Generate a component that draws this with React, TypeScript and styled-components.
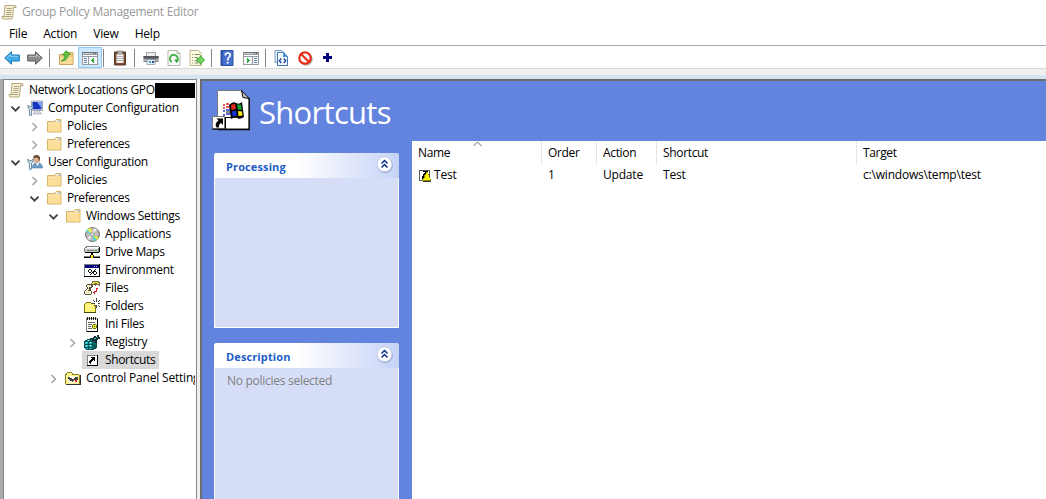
import React from "react";
import styled, { createGlobalStyle } from "styled-components";

const Global = createGlobalStyle`
  * { box-sizing: border-box; }
  body { margin: 0; background: #fff; overflow: hidden; }
  svg { display: block; flex: none; }
`;

const Window = styled.div`
  width: 1046px;
  height: 499px;
  display: flex;
  flex-direction: column;
  overflow: hidden;
  background: #fff;
  color: #000;
  font: 12px/18px "Open Sans", "Noto Sans", sans-serif;
  letter-spacing: -0.2px;
  white-space: nowrap;
`;

const TitleBar = styled.header`
  height: 24px;
  flex: none;
  display: flex;
  align-items: center;
  padding-left: 1px;
  gap: 5px;
  color: #999;
  letter-spacing: -0.28px;
`;

const MenuBar = styled.nav`
  height: 21px;
  flex: none;
  display: flex;
  align-items: center;
  padding: 0 0 1px 9px;
  gap: 16px;
`;

const Toolbar = styled.div`
  height: 24px;
  flex: none;
  display: flex;
  align-items: center;
  border-top: 1px solid #a5a7ac;
  border-bottom: 1px solid #d9d9d9;
  padding: 1px 0 0 4px;
`;

const Tool = styled.span<{ $gap?: number; $active?: boolean }>`
  display: flex;
  align-items: center;
  justify-content: center;
  width: ${(p) => (p.$active ? 24 : 16)}px;
  height: ${(p) => (p.$active ? 21 : 16)}px;
  margin-left: ${(p) => p.$gap ?? 0}px;
  border: ${(p) => (p.$active ? "1px solid #90c8f6" : "none")};
  background: ${(p) => (p.$active ? "#cce8ff" : "transparent")};
`;

const Separator = styled.i<{ $gap: number }>`
  width: 1px;
  height: 18px;
  margin-left: ${(p) => p.$gap}px;
  background: #858585;
`;

const Band = styled.div`
  height: 10px;
  flex: none;
  background: #f0f0f0;
  border-bottom: 4px solid #d6e3f0;
`;

const Body = styled.main`
  flex: 1;
  min-height: 0;
  display: flex;
`;

const Edge = styled.div`
  width: 3px;
  flex: none;
  background: #ababab;
`;

const TreePane = styled.aside`
  width: 194px;
  flex: none;
  overflow: hidden;
  border: 1px solid #828790;
  border-bottom: 0;
  padding-top: 1px;
`;

const Splitter = styled.div`
  width: 3px;
  flex: none;
  background: #f0eeee;
`;

const TreeRow = styled.div<{ $level: number }>`
  height: 18px;
  display: flex;
  align-items: center;
  margin-right: 1px;
  overflow: hidden;
  padding-left: ${(p) => (p.$level ? p.$level * 19 - 13 : 4)}px;
`;

const Slot = styled.span`
  width: 15px;
  flex: none;
`;

const Node = styled.span<{ $selected?: boolean; $level: number }>`
  height: 18px;
  flex: none;
  display: flex;
  align-items: center;
  gap: 5px;
  padding: 0 4px 0 ${(p) => (p.$level ? 2 : 0)}px;
  background: ${(p) => (p.$selected ? "#d9d9d9" : "transparent")};
`;

const Label = styled.span<{ $tracking?: number }>`
  letter-spacing: ${(p) => p.$tracking ?? -0.22}px;
`;

const Redaction = styled.span`
  flex: 1;
  height: 15px;
  margin: 0 -1px 0 -4px;
  background: #000;
`;

const Content = styled.section`
  flex: 1;
  min-width: 0;
  display: flex;
  flex-direction: column;
  border-top: 2px solid #6d6d6d;
  border-left: 2px solid #6d6d6d;
  background: #6283de;
`;

const Banner = styled.div`
  height: 60px;
  flex: none;
  display: flex;
  align-items: center;
  padding-left: 10px;
`;

const Heading = styled.h1`
  margin: 2px 0 0 9px;
  font: 400 31px/44px "Open Sans", "Noto Sans", sans-serif;
  letter-spacing: -0.7px;
  color: #fff;
`;

const Columns = styled.div`
  flex: 1;
  min-height: 0;
  display: flex;
`;

const Side = styled.div`
  width: 210px;
  flex: none;
  display: flex;
  flex-direction: column;
  gap: 15px;
  padding: 12px 13px 0 12px;
`;

const Card = styled.section<{ $grow?: boolean }>`
  height: ${(p) => (p.$grow ? 200 : 175)}px;
  flex: none;
  border: 1px solid #fff;
  border-top: 0;
  border-radius: 3px 3px 0 0;
  background: #d6def7;
`;

const CardHead = styled.div`
  height: 25px;
  margin: 0 -1px;
  display: flex;
  align-items: flex-start;
  justify-content: space-between;
  padding: 2px 5px 0 12px;
  border-radius: 3px 3px 0 0;
  background: linear-gradient(90deg, #fff 45%, #c6d3f7);
  color: #215dc6;
`;

const CardTitle = styled.h2`
  margin: 3px 0 0;
  font: 700 11px/18px "Open Sans", "Noto Sans", sans-serif;
  letter-spacing: 0.12px;
`;

const CardText = styled.p`
  margin: 4px 0 0 12px;
  color: #808080;
  letter-spacing: -0.28px;
`;

const Table = styled.div`
  flex: 1;
  min-width: 0;
  background: #fff;
`;

const Row = styled.div<{ $head?: boolean }>`
  height: ${(p) => (p.$head ? 24 : 20)}px;
  display: grid;
  grid-template-columns: 130px 55px 60px 200px 1fr;
`;

const Cell = styled.span<{ $head?: boolean }>`
  position: relative;
  display: flex;
  align-items: center;
  gap: 2px;
  padding-left: 6px;
  letter-spacing: ${(p) => (p.$head ? -0.34 : -0.2)}px;
  border-right: ${(p) => (p.$head ? "1px solid #e5e5e5" : "0")};
  &:last-child { border-right: 0; }
`;

const SortMark = styled.span`
  position: absolute;
  left: 61px;
  top: 0;
`;

type Kid = { children: React.ReactNode };
const Ico = ({ children }: Kid) => (
  <svg width="16" height="16" viewBox="0 0 16 16">{children}</svg>
);
const Pix = ({ children }: Kid) => (
  <svg width="16" height="16" viewBox="0 0 16 16" shapeRendering="crispEdges">{children}</svg>
);

const Scroll = () => (
  <Ico>
    <path d="M4 1.500h10q1.500 0 1 2h-2.500L11.500 14q-.4 1-1.500 1H2q-1.500-.5-1-2.500h2z" fill="#f7efd2" stroke="#b5a67c" />
    <path d="M3 12.500h7.500M12 3.500h2.500M6 4.500h5M5.500 6.500h5M5.300 8.500h5M5 10.500h5" stroke="#a59a78" fill="none" strokeWidth=".9" />
  </Ico>
);
const Arrow = ({ fill, line, flip }: { fill: string; line: string; flip?: boolean }) => (
  <Ico>
    <g transform={flip ? "translate(16 0) scale(-1 1)" : undefined}>
      <path d="M.7 8 7.500 1.700V5h7.800v6H7.500v3.300z" fill={fill} stroke={line} strokeLinejoin="round" />
      <path d="M3 7.700 6.500 4.500V6.300h7.500" fill="none" stroke="#fff" strokeOpacity=".45" />
    </g>
  </Ico>
);
const Folder = () => (
  <Ico>
    <path d="M1.500 3.500h7l1.500-2h5v12.500h-13.500z" fill="#e9c878" stroke="#d9b566" />
    <path d="M10 2.300h4.500v1.200H9.500z" fill="#fff" />
    <path d="M12.500 2.300h2v1.200h-2z" fill="#6fb0e8" />
    <path d="M2 5h12.500v8.500H2z" fill="#fbdf98" />
    <path d="M2 5h12.500" stroke="#fff0c4" />
  </Ico>
);
const FolderUp = () => (
  <Ico>
    <path d="M1.500 4.500h6l1.500-2h6v12H1.500z" fill="#eccb80" stroke="#c9a45a" />
    <path d="M2 7h12.500v7H2z" fill="#f8dc98" />
    <path d="M3 11q4-1 3.500-6H4.500L8 .7 12.500 4.500H10q0 6.500-7 6.500z" fill="#62c443" stroke="#35982a" strokeWidth=".8" />
  </Ico>
);
const Panes = ({ right }: { right?: boolean }) => (
  <Pix>
    <path d="M0 2h16v13H0z" fill="#969ba1" />
    <path d="M0 2h16v1H0z" fill="#6f757c" />
    <path d="M1 3h14v1H1z" fill="#c9cdd1" />
    <path d="M11 3h1v1h-1zM13 3h1v1h-1z" fill="#50565d" />
    <path d="M1 5h14v1H1z" fill="#fff" />
    <path d="M1 7h14v7H1z" fill="#f7f8f9" />
    <path d={right ? "M9 7h1v7H9z" : "M6 7h1v7H6z"} fill="#969ba1" />
    <path d={right ? "M11 8h3v1h-3zM11 10h3v1h-3zM11 12h3v1h-3z" : "M2 8h3v1H2zM2 10h3v1H2zM2 12h3v1H2z"} fill="#5f7fa3" />
    <path d={right ? "M4 8h1v5H4zM5 9h1v3H5zM6 10h1v1H6z" : "M12 8h-1v5h1zM11 9h-1v3h1zM10 10H9v1h1z"} fill="#2cad3c" />
  </Pix>
);
const Clipboard = () => (
  <Ico>
    <path d="M2.500 2h11v13h-11z" fill="#7b4c32" stroke="#5b3826" />
    <path d="M4.500 4h7v9h-7z" fill="#f2f2ef" />
    <path d="M5.500 1h5v3h-5z" fill="#bdbdb9" stroke="#666" strokeWidth=".7" />
    <path d="M5 6.500h6M5 8.500h6M5 10.500h6" stroke="#b5b5b5" />
  </Ico>
);
const Printer = () => (
  <Ico>
    <path d="M3.500 2.500h9v5h-9z" fill="#eceff1" stroke="#a0a4a8" />
    <path d="M.5 6h15v6H.5z" fill="#85898e" />
    <path d="M.5 6h15v2.500H.5z" fill="#54585d" />
    <path d="M1 9.500h3v1H1zM12.500 9.500h2.500v1h-2.500z" fill="#d3d6d9" />
    <path d="M4 9.500h8v5H4z" fill="#e4f0f8" stroke="#888" strokeWidth=".7" />
    <path d="M6 11h2v2H6z" fill="#3b95d8" /><path d="M9 11h2v2H9z" fill="#244c86" />
  </Ico>
);
const Refresh = () => (
  <Ico>
    <path d="M2 .5h9l3 3v12H2z" fill="#fdfdfb" stroke="#b5b5ae" />
    <path d="M11 .5v3h3" fill="#e5e5e5" stroke="#b5b5ae" />
    <path d="M6 12A3.800 3.800 0 1 1 11.500 9.500" fill="none" stroke="#44b348" strokeWidth="1.900" />
    <path d="M8 9.500h5.500L10.700 13z" fill="#2fa23b" />
  </Ico>
);
const Export = () => (
  <Ico>
    <path d="M1 .5h8.500l3 3v12H1z" fill="#fffbe0" stroke="#b9b393" />
    <path d="M3 4.500h1M5.500 4.500h5M3 7.500h1M5.500 7.500h3M3 10.500h1M5.500 10.500h3M3 13h1M5.500 13h4" stroke="#8a8973" />
    <path d="M8 8h3V5.500l4.700 4.500L11 14.500V12H8z" fill="#72d25c" stroke="#3b9e34" strokeWidth=".8" />
  </Ico>
);
const Help = () => (
  <Ico>
    <path d="M2 .5h12v15H2z" fill="#4870d0" stroke="#2c4f9c" />
    <path d="M2 1h2v14H2z" fill="#2f54ab" />
    <path d="M6.300 5.500Q6.300 3 8.700 3t2.400 2.200q0 1.300-1.200 2.200T8.700 10v.5" fill="none" stroke="#fff" strokeWidth="1.700" />
    <path d="M7.800 11.800h1.800v1.800H7.800z" fill="#fff" />
  </Ico>
);
const Docs = () => (
  <Ico>
    <path d="M2 .5h7l2 2v10H2z" fill="#e8f4ff" stroke="#7b9dbf" />
    <path d="M4.500 2.500h6L14.500 6.500v9h-10z" fill="#f6fbff" stroke="#4076ad" />
    <path d="M10 2.500 14.500 7H10z" fill="#3e92d6" />
    <path d="M8.300 8.500 6.300 10.800l2 2.200M10.800 8.500l2 2.300-2 2.200" fill="none" stroke="#203c91" strokeWidth="1.300" />
  </Ico>
);
const Stop = () => (
  <Ico>
    <circle cx="9" cy="9" r="5.700" fill="none" stroke="#777" strokeOpacity=".6" strokeWidth="2" />
    <circle cx="8" cy="8" r="5.700" fill="#fff" stroke="#e92a14" strokeWidth="2.200" />
    <path d="m4 4 8 8" stroke="#e92a14" strokeWidth="2.200" />
  </Ico>
);
const Plus = () => (
  <Pix><path d="M7 3h3v3h3v3h-3v3H7V9H4V6h3z" fill="#000080" /></Pix>
);
const Wrench = () => (
  <>
    <path d="M1 5v3l1.500 1v6.300h2V9L6 8V5L4.500 6.500h-2z" fill="#c4dce9" stroke="#547991" strokeWidth=".8" />
    <path d="M3.500 9v5" stroke="#fff" strokeWidth=".6" />
  </>
);
const Computer = () => (
  <Ico>
    <path d="M4.500 1h11v9.500h-11z" fill="#d9dde3" stroke="#8d96a3" strokeWidth=".8" />
    <path d="M5.500 2h9v7.300h-9z" fill="#1733c4" />
    <path d="M10 2h4.500v6z" fill="#7ea6f4" />
    <path d="M8 10.500h4l2.500 3.500H6z" fill="#d5d9de" stroke="#929aa4" strokeWidth=".6" />
    <Wrench />
  </Ico>
);
const User = () => (
  <Ico>
    <path d="M5.500 14q-.5-5 4.500-5.500 5.500.5 5.500 5.500z" fill="#6d9dc9" stroke="#4d7ba8" strokeWidth=".6" />
    <path d="m9 9 1.500 3L12 9z" fill="#fff" />
    <circle cx="9.500" cy="5.200" r="3.400" fill="#dfb28c" />
    <path d="M6.200 4.500Q6 .8 9.500 1q4 .2 3.500 4.500-.5 1.500-1 2Q12 4 9.500 3.500z" fill="#6e4b30" />
    <Wrench />
  </Ico>
);
const Disc = () => (
  <Ico>
    <circle cx="8.500" cy="8.500" r="6.900" fill="#bdbdbd" stroke="#5f5f5f" />
    <path d="M8.500 8.500 3 3.500 7 1.900z" fill="#f5ec3a" /><path d="M8.500 8.500 1.900 6 3 3.500z" fill="#5fe0e0" />
    <path d="m8.500 8.500 4.500 5.500-3.500 1.200z" fill="#46d9d9" /><path d="m8.500 8.500 6.300 3L13 14z" fill="#ebe83c" />
    <path d="m8.500 8.500 1.500-6.500 3 1.500z" fill="#eee" /><path d="M8.500 8.500 3 12l2.500 2.500z" fill="#e6e6e6" />
    <circle cx="8.500" cy="8.500" r="1.600" fill="#fff" stroke="#666" strokeWidth=".7" />
  </Ico>
);
const Drive = () => (
  <Pix>
    <path d="M2 2h13v1h1v5h-1v1H1V8H0V4h1V3h1z" fill="#808080" />
    <path d="M3 3h12v1H2z" fill="#fff" /><path d="M1 4h13v4H1z" fill="#c6c6c6" />
    <path d="M1 4h13v1H1z" fill="#e9e9e9" />
    <path d="M15 3h1v5h-1v1H1V8h14z" fill="#000" />
    <path d="M3 6h7v1H3z" fill="#808080" /><path d="M11 6h2v1h-2z" fill="#00b400" />
    <path d="M7 9h2v2H7z" fill="#000" /><path d="M0 12h16v1H0z" fill="#808080" /><path d="M0 13h16v1H0z" fill="#000" />
    <path d="M6 11h4v3H6z" fill="#222" /><path d="M7 11h2v3H7z" fill="#f4ea00" />
  </Pix>
);
const Environment = () => (
  <Pix>
    <path d="M0 2h16v13H0z" fill="#808080" /><path d="M15 2h1v13H0v-1h15z" fill="#000" />
    <path d="M1 3h14v3H1z" fill="#000080" />
    <path d="M10 4h1v1h-1zM12 4h1v1h-1z" fill="#c0c0c0" /><path d="M1 6h14v8H1z" fill="#fff" />
    <path d="M5 7h2v1H5zM4 8h1v2H4zM7 8h1v2H7zM5 10h2v1H5zM11 7h1v1h-1zM10 8h1v1h-1zM9 9h1v1H9zM8 10h1v1H8zM7 11h1v1H7zM6 12h1v1H6zM10 9h2v1h-2zM9 10h1v2H9zM12 10h1v2h-1zM10 12h2v1h-2z" fill="#111" />
  </Pix>
);
const Files = () => (
  <Pix>
    <path d="M8 1h7v1h1v4h-1V5h-3v1h-1V5H9v1H8V5H7V3h1z" fill="#6c6846" />
    <path d="M9 2h5v1h1v1h-2V3h-3v1H8V3h1z" fill="#fff04a" />
    <path d="M3 4h5v1h1v2H8v1H7v3h1v3H7v1H1v-1H0v-3h1v-1h1V9h1V7H2V5h1z" fill="#55523f" />
    <path d="M3 5h4v2H5v3H4v1H2v-1h1V9h1V7H3zM1 11h6v3H1z" fill="#faf6d6" />
    <path d="M5 5h1v1H5zM2 12h1v1H2zM4 12h1v1H4zM4 8h1v1H4z" fill="#cfc67a" />
    <path d="M12 8h2v1h-1v3h-2v2h-1v-1H9v-1h1v-1h2z" fill="#e71b25" />
  </Pix>
);
const Folders = () => (
  <Pix>
    <path d="M1 5h1V4h5v1h5v10H1v-1H0V6h1z" fill="#7d7a1c" /><path d="M2 5h5v1h4v8H1V6h1z" fill="#fff26a" />
    <path d="M2 7h1v1H2zM4 7h1v1H4zM6 7h1v1H6zM8 7h1v1H8zM3 9h1v1H3zM5 9h1v1H5zM7 9h1v1H7zM2 11h1v1H2zM4 11h1v1H4zM6 11h1v1H6zM8 11h1v1H8z" fill="#fffde0" />
    <path d="M0 14h12v1H0z" fill="#4b4912" />
    <path d="M12 0h1v4h-1zM12 7h1v3h-1zM8 5h3v1H8zM14 5h2v1h-2zM9 2h1v1H9zM10 3h1v1h-1zM14 3h1v1h-1zM15 2h1v1h-1zM10 7h1v1h-1zM14 7h1v1h-1zM15 8h1v1h-1z" fill="#444" />
    <path d="M11 4h3v3h-3z" fill="#fff" />
  </Pix>
);
const Ini = () => (
  <Pix>
    <path d="M2 2h12v14H2z" fill="#808080" /><path d="M13 3h1v13H3v-1h10z" fill="#000" /><path d="M3 3h10v12H3z" fill="#fff" />
    <path d="M3 1h1v3H3zM5 1h1v3H5zM7 1h1v3H7zM9 1h1v3H9zM11 1h1v3h-1z" fill="#222" />
    <path d="M4 6h7v1H4zM4 8h4v1H4zM4 10h3v1H4zM4 12h4v1H4z" fill="#666" />
    <path d="M9 8h3v1h1v3h-1v1H9v-1H8V9h1z" fill="#777100" /><path d="M9 9h3v3H9z" fill="#f2ef2e" /><path d="M10 10h1v1h-1z" fill="#222" />
  </Pix>
);
const Registry = () => (
  <Pix>
    <path d="M1 6h2V5h3V4h3v2h3v1h1v7h-1v1h-2v1H2v-1H1v-1H0V7h1z" fill="#0a4f52" />
    <path d="M1 8h3v2H1zM5 8h3v2H5zM1 11h3v2H1zM5 11h3v2H5zM2 14h2v1H2zM5 14h3v1H5zM3 6h3v1H3z" fill="#1fb9bd" />
    <path d="M2 8h1v1H2zM6 8h1v1H6zM2 11h1v1H2zM6 11h1v1H6zM4 6h1v1H4z" fill="#b9ffff" />
    <path d="M9 8h1v2H9zM11 9h1v2h-1zM9 12h1v2H9z" fill="#008080" />
    <path d="M9 3h1V2h2v1h1V1h2v2h1v2h-2v1h-1v3h-2V7H9V6H8V4h1z" fill="#1b2b2d" />
    <path d="M10 4h2v1h-2zM13 3h1v1h-1z" fill="#35d5da" />
  </Pix>
);
const Shortcut = () => (
  <Pix>
    <path d="M3 3h11v11H3z" fill="#000" /><path d="M3 3h10v10H3z" fill="#808080" /><path d="M4 4h9v9H4z" fill="#fff" />
    <path d="M7 5h4v4h-1V8H9v1H8v1H7v2H6v-1H5V9h1V8h1V7h1V6H7z" fill="#000" />
  </Pix>
);
const ControlPanel = () => (
  <Pix>
    <path d="M1 3h1V2h5v1h1v1h6v1h1v10H1v-1H0V4h1z" fill="#8a851f" /><path d="M2 3h5v2h7v9H1V5h1z" fill="#fff08a" />
    <path d="M1 14h14V5h1v10H1z" fill="#333" />
    <path d="M3 6h10v7H3z" fill="#fffbe4" />
    <path d="M3 7h2v1h2v1h2V8h1V7h3v3h-2v1h-1v-1H9v1H8v1H7v-1H5v-1H4V9H3z" fill="#444" /><path d="M10 10h2v2h-2z" fill="#e22" />
  </Pix>
);
const WarnShortcut = () => (
  <svg width="14" height="13" viewBox="0 0 14 13" shapeRendering="crispEdges">
    <path d="M1 1h11v11H1z" fill="#555" /><path d="M2 2h9v9H2z" fill="#fff" />
    <path d="M5 2h5v4H9V5H8v1H7v1H6v2H5v1H4V7h1V5h1V4h1V3H5z" fill="#000" />
    <path d="M8 3h2v2h1v3h1v2h1v2H4v-2h1V9h1V6h1V5h1z" fill="#8d8a12" />
    <path d="M8 4h2v2h1v3h1v2H5v-1h1V9h1V6h1z" fill="#fff500" />
    <path d="M5 12h8v1H5z" fill="#333" />
  </svg>
);
const Chevron = ({ open }: { open: boolean }) => (
  <svg width="11" height="12" viewBox="0 0 11 12">
    <path d={open ? "m1.500 4.700 4 4 4-4" : "m3.500 3 4 4-4 4"} fill="none" stroke={open ? "#404040" : "#a6a6a6"} strokeWidth={open ? 1.800 : 1.500} />
  </svg>
);
const Collapse = () => (
  <svg width="19" height="19" viewBox="0 0 19 19">
    <circle cx="10" cy="10.300" r="8" fill="#9aa8cc" fillOpacity=".7" />
    <circle cx="9.500" cy="9.200" r="7.400" fill="#fff" stroke="#b8c3df" strokeWidth=".8" />
    <path d="m6.500 8.500 3-3 3 3m-6 4 3-3 3 3" fill="none" stroke="#0b2f8a" strokeWidth="1.500" />
  </svg>
);
const BigShortcut = () => (
  <svg width="38" height="42" viewBox="0 0 38 42">
    <path d="M5.500 .5h24l7.500 8v30.500H5.500z" fill="#fff" stroke="#777" />
    <path d="M37.200 8v31.500H6" fill="none" stroke="#000" strokeWidth="1.300" />
    <path d="M29.500 .5 31 7.500l6 1z" fill="#ccc" stroke="#000" />
    <path d="M17 15q4-4 7-2 3 2 6-1l2 15q-4 3-7 1-3-1-6 1z" fill="#000" />
    <path d="m19 15 4-1.500 1 5.500-4.500 1z" fill="#e3281e" /><path d="m25 14.500 4 0 .7 5.500-4-.5z" fill="#16a330" />
    <path d="m20 21.500 4-1 .8 5-4 1z" fill="#1934df" /><path d="m26 21 4 .5.500 4-4 .5z" fill="#ffeb15" />
    <path d="M11 15h2M14 14h3M11 18h2M14 17h3" stroke="#e22" strokeWidth="1.700" />
    <path d="M11 21h2M14 20h4M11 25h2M14 24h5" stroke="#2334cf" strokeWidth="1.700" />
    <path d="M14 27.500h5M14 22h4" stroke="#111" />
    <path d="M.5 26.500h12v12H.5z" fill="#fff" stroke="#777" /><path d="M0 39.200h13.500V27" fill="none" stroke="#000" />
    <path d="M4.500 28.500H11V35L9 33q-2.500 1-2 4.500H4.500Q2 33.500 6.500 30.500z" fill="#000" />
  </svg>
);

type Item = { label: string; level: number; icon: React.ReactNode; open?: boolean; selected?: boolean; tracking?: number };
const tree: Item[] = [
  { label: "Network Locations GPO", level: 0, icon: <Scroll />, tracking: -0.34 },
  { label: "Computer Configuration", level: 1, icon: <Computer />, open: true, tracking: -0.24 },
  { label: "Policies", level: 2, icon: <Folder />, open: false },
  { label: "Preferences", level: 2, icon: <Folder />, open: false, tracking: -0.4 },
  { label: "User Configuration", level: 1, icon: <User />, open: true, tracking: -0.33 },
  { label: "Policies", level: 2, icon: <Folder />, open: false },
  { label: "Preferences", level: 2, icon: <Folder />, open: true, tracking: -0.4 },
  { label: "Windows Settings", level: 3, icon: <Folder />, open: true, tracking: -0.3 },
  { label: "Applications", level: 4, icon: <Disc />, tracking: -0.2 },
  { label: "Drive Maps", level: 4, icon: <Drive />, tracking: -0.35 },
  { label: "Environment", level: 4, icon: <Environment />, tracking: -0.3 },
  { label: "Files", level: 4, icon: <Files /> },
  { label: "Folders", level: 4, icon: <Folders />, tracking: -0.4 },
  { label: "Ini Files", level: 4, icon: <Ini />, tracking: -0.25 },
  { label: "Registry", level: 4, icon: <Registry />, open: false, tracking: -0.3 },
  { label: "Shortcuts", level: 4, icon: <Shortcut />, selected: true, tracking: -0.35 },
  { label: "Control Panel Settings", level: 3, icon: <ControlPanel />, open: false, tracking: -0.2 },
];

export default function App() {
  return (
    <Window>
      <Global />
      <TitleBar><Scroll /><span>Group Policy Management Editor</span></TitleBar>
      <MenuBar><span>File</span><span>Action</span><span>View</span><span>Help</span></MenuBar>
      <Toolbar>
        <Tool><Arrow fill="#3fabe8" line="#1b73b4" /></Tool>
        <Tool $gap={7}><Arrow fill="#8b8b8b" line="#5c5c5c" flip /></Tool>
        <Separator $gap={6} />
        <Tool $gap={8}><FolderUp /></Tool>
        <Tool $gap={4} $active><Panes /></Tool>
        <Separator $gap={1} />
        <Tool $gap={8}><Clipboard /></Tool>
        <Separator $gap={6} />
        <Tool $gap={8}><Printer /></Tool>
        <Tool $gap={7}><Refresh /></Tool>
        <Tool $gap={7}><Export /></Tool>
        <Separator $gap={6} />
        <Tool $gap={7}><Help /></Tool>
        <Tool $gap={8}><Panes right /></Tool>
        <Separator $gap={6} />
        <Tool $gap={7}><Docs /></Tool>
        <Tool $gap={8}><Stop /></Tool>
        <Tool $gap={6}><Plus /></Tool>
      </Toolbar>
      <Band />
      <Body>
        <Edge />
        <TreePane>
          {tree.map((n, i) => (
            <TreeRow key={i} $level={n.level}>
              {n.level > 0 && <Slot>{n.open !== undefined && <Chevron open={n.open} />}</Slot>}
              <Node $level={n.level} $selected={n.selected}>{n.icon}<Label $tracking={n.tracking}>{n.label}</Label></Node>
              {n.level === 0 && <Redaction />}
            </TreeRow>
          ))}
        </TreePane>
        <Splitter />
        <Content>
          <Banner><BigShortcut /><Heading>Shortcuts</Heading></Banner>
          <Columns>
            <Side>
              <Card><CardHead><CardTitle>Processing</CardTitle><Collapse /></CardHead></Card>
              <Card $grow><CardHead><CardTitle>Description</CardTitle><Collapse /></CardHead><CardText>No policies selected</CardText></Card>
            </Side>
            <Table>
              <Row $head>
                <Cell $head>Name<SortMark><svg width="9" height="6" viewBox="0 0 9 6"><path d="M.5 5 4.500 1l4 4" fill="none" stroke="#666" /></svg></SortMark></Cell>
                <Cell $head>Order</Cell><Cell $head>Action</Cell><Cell $head>Shortcut</Cell><Cell $head>Target</Cell>
              </Row>
              <Row>
                <Cell><WarnShortcut />Test</Cell><Cell>1</Cell><Cell>Update</Cell><Cell>Test</Cell><Cell>c:\windows\temp\test</Cell>
              </Row>
            </Table>
          </Columns>
        </Content>
      </Body>
    </Window>
  );
}
